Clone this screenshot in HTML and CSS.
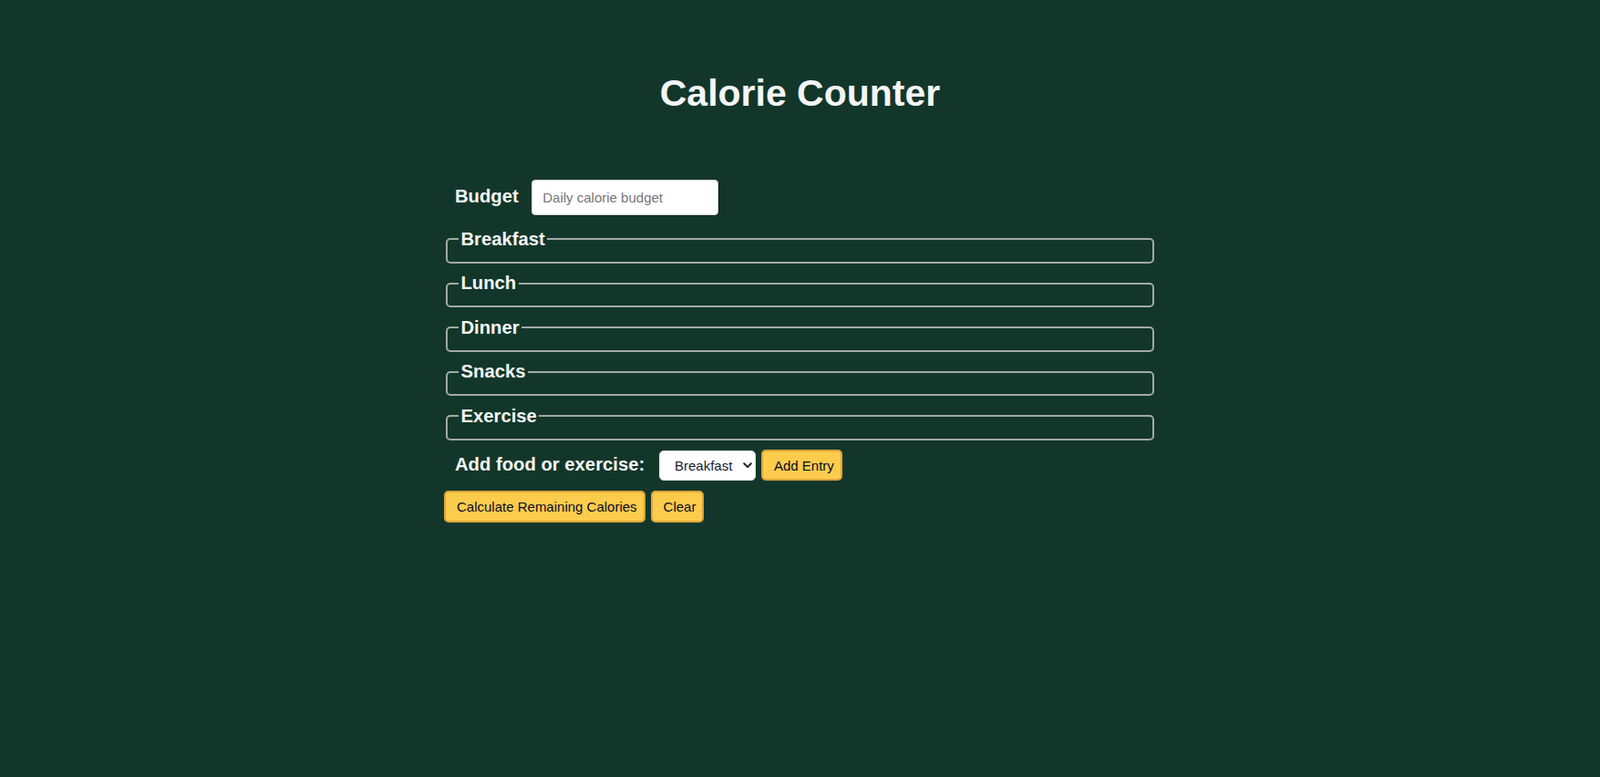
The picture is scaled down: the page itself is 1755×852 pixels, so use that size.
FILE: index.html
```html
<!DOCTYPE html>
<html lang="en">
<head>
<meta charset="utf-8">
<title>Calorie Counter</title>
<link rel="stylesheet" href="styles.css">
</head>
<body>
<h1 class="title">Calorie Counter</h1>
<main class="container">
  <form class="calorie-form">
    <div class="form-row budget-row">
      <label class="field-label" for="budget">Budget</label>
      <input class="budget-input" type="number" id="budget" min="0" placeholder="Daily calorie budget">
    </div>
    <fieldset class="meal"><legend class="meal-legend">Breakfast</legend><div class="entries"></div></fieldset>
    <fieldset class="meal"><legend class="meal-legend">Lunch</legend><div class="entries"></div></fieldset>
    <fieldset class="meal"><legend class="meal-legend">Dinner</legend><div class="entries"></div></fieldset>
    <fieldset class="meal"><legend class="meal-legend">Snacks</legend><div class="entries"></div></fieldset>
    <fieldset class="meal"><legend class="meal-legend">Exercise</legend><div class="entries"></div></fieldset>
    <div class="form-row add-row">
      <label class="field-label" for="entry-dropdown">Add food or exercise:</label>
      <span class="select-wrap">
        <select class="entry-select" id="entry-dropdown" name="options">
          <option value="breakfast" selected>Breakfast</option>
          <option value="lunch">Lunch</option>
          <option value="dinner">Dinner</option>
          <option value="snacks">Snacks</option>
          <option value="exercise">Exercise</option>
        </select>
        <svg class="chevron" width="10" height="7" viewBox="0 0 10 7" aria-hidden="true"><path d="M1.2 1.3 L5 5.1 L8.8 1.3" fill="none" stroke="#222" stroke-width="2" stroke-linecap="round" stroke-linejoin="round"/></svg>
      </span>
      <button class="btn" type="button">Add Entry</button>
    </div>
    <div class="actions">
      <button class="btn" type="submit">Calculate Remaining Calories</button>
      <button class="btn" type="button">Clear</button>
    </div>
  </form>
</main>
</body>
</html>
```

FILE: styles.css
```css
* {
  box-sizing: border-box;
}

body {
  margin: 0;
  background-color: #12372a;
  color: #f5f6f7;
  font-family: "Liberation Sans", Arial, sans-serif;
  font-size: 20.25px;
}

.title {
  margin: 79px 0 0;
  font-size: 41px;
  line-height: 46px;
  font-weight: bold;
  text-align: center;
}

.container {
  width: 781px;
  margin: 72px auto 0;
}

.form-row {
  display: flex;
  align-items: baseline;
}

.budget-row {
  margin-bottom: 14.5px;
}

.field-label {
  font-weight: bold;
  margin-left: 12px;
  margin-right: 14.5px;
}

.add-row .field-label {
  margin-right: 15.8px;
}

.budget-input {
  width: 205px;
  height: 39px;
  padding: 0 11px;
  border: 1px solid #cfcfcf;
  border-radius: 4px;
  box-shadow: 1px 1px 1px rgba(0, 0, 0, 0.35);
  background: #fff;
  color: #0a0a23;
  font-family: "Liberation Sans", Arial, sans-serif;
  font-size: 15px;
}

.budget-input::placeholder {
  color: #767676;
}

.meal {
  margin: 0 2.25px 10.6px;
  padding: 0 12px 13px;
  border: 2px solid #a2a9a5;
  border-radius: 5px;
  min-width: 0;
}

.meal-legend {
  padding: 0 2.25px;
  font-weight: bold;
  font-size: 20.25px;
}

.entries {
  display: flex;
  flex-direction: column;
}

.add-row {
  margin-top: 1.5px;
  margin-bottom: 11px;
}

.select-wrap {
  position: relative;
  display: inline-block;
  margin-right: 6px;
}

.entry-select {
  appearance: none;
  -webkit-appearance: none;
  width: 106px;
  height: 33px;
  padding: 0 22px 0 16px;
  border: 1px solid #e2e2e2;
  border-radius: 5px;
  background: #fff;
  color: #1b1b32;
  font-family: "Liberation Sans", Arial, sans-serif;
  font-size: 15px;
}

.chevron {
  position: absolute;
  right: 4px;
  top: 13px;
  pointer-events: none;
}

.btn {
  height: 34px;
  padding: 0 7px 0 12px;
  border: 2px solid #dca43a;
  border-radius: 5px;
  background-color: #fecc4c;
  color: #0a0a23;
  font-family: "Liberation Sans", Arial, sans-serif;
  font-size: 15px;
  cursor: pointer;
}

.actions {
  display: flex;
  gap: 6px;
}

.actions .btn {
  height: 35px;
}
```
